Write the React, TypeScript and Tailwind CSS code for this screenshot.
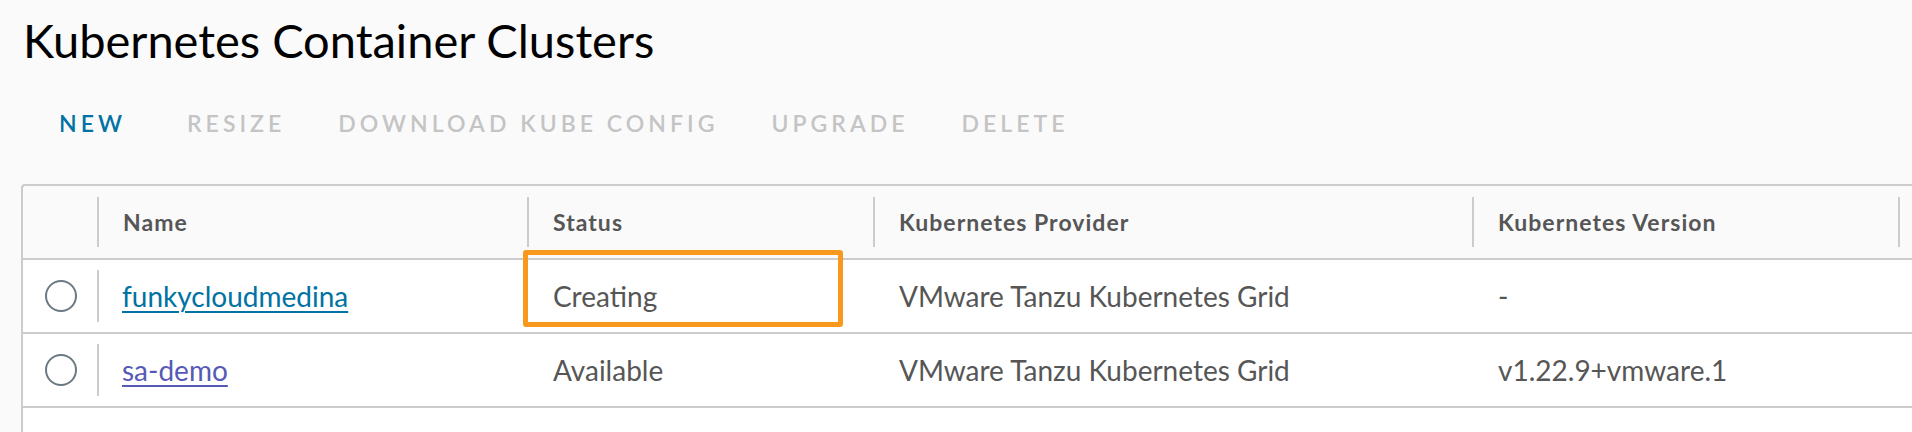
import React from 'react';

const actions = [
  { label: 'NEW', enabled: true },
  { label: 'RESIZE', enabled: false },
  { label: 'DOWNLOAD KUBE CONFIG', enabled: false },
  { label: 'UPGRADE', enabled: false },
  { label: 'DELETE', enabled: false },
];

const clusters = [
  {
    name: 'funkycloudmedina',
    visited: false,
    status: 'Creating',
    provider: 'VMware Tanzu Kubernetes Grid',
    version: '-',
  },
  {
    name: 'sa-demo',
    visited: true,
    status: 'Available',
    provider: 'VMware Tanzu Kubernetes Grid',
    version: 'v1.22.9+vmware.1',
  },
];

const cols = 'grid grid-cols-[74px_430px_346px_599px_426px_1fr]';

function HeaderCell({ label }: { label?: string }) {
  return (
    <div className="flex items-center">
      <div className="w-[2px] h-[50px] bg-[#cccccc]" />
      {label && (
        <span className="ml-[24px] text-[23px] font-bold tracking-[0.045em] text-[#565656]">
          {label}
        </span>
      )}
    </div>
  );
}

export default function App() {
  return (
    <div className="relative w-[1912px] h-[432px] overflow-hidden bg-[#fafafa] font-['Lato',sans-serif]">
      <h1 className="pl-[23px] pt-[15px] text-[47px] leading-[50px] font-normal text-black">
        Kubernetes Container Clusters
      </h1>

      <div className="flex items-center pl-[59px] mt-[47px] gap-[53px]">
        {actions.map((a) => (
          <button
            key={a.label}
            className={`text-[23px] leading-[23px] font-semibold tracking-[0.175em] ${
              a.enabled ? 'text-[#0072a3] mr-[8px]' : 'text-[#c4c4c4]'
            }`}
          >
            {a.label}
          </button>
        ))}
      </div>

      <div className="ml-[21px] mt-[49px] w-[1920px] h-[300px] bg-white border-l-2 border-t-2 border-[#cccccc] rounded-tl-[4px]">
        <div className={`${cols} h-[74px] bg-[#fafafa] border-b-2 border-[#cccccc] rounded-tl-[4px]`}>
          <div />
          <HeaderCell label="Name" />
          <HeaderCell label="Status" />
          <HeaderCell label="Kubernetes Provider" />
          <HeaderCell label="Kubernetes Version" />
          <HeaderCell />
        </div>

        {clusters.map((c) => (
          <div key={c.name} className={`${cols} h-[74px] border-b-2 border-[#cccccc] text-[28px] text-[#565656]`}>
            <div className="flex items-center justify-center pl-[2px]">
              <span className="w-[32px] h-[32px] rounded-full border-2 border-[#6b7a82]" />
            </div>
            <div className="flex items-center">
              <div className="w-[2px] h-[52px] bg-[#cccccc]" />
              <a
                href="#"
                className={`ml-[23px] underline underline-offset-[4px] decoration-[1.5px] ${
                  c.visited ? 'text-[#5659b6]' : 'text-[#0072a3]'
                }`}
              >
                {c.name}
              </a>
            </div>
            <div className="flex items-center pl-[26px]">{c.status}</div>
            <div className="flex items-center pl-[26px]">{c.provider}</div>
            <div className="flex items-center pl-[26px]">{c.version}</div>
            <div />
          </div>
        ))}
      </div>

      {/* highlight around the status being created */}
      <div className="absolute left-[523px] top-[250px] w-[320px] h-[77px] border-[5px] border-[#f8981d] rounded-[3px]" />
    </div>
  );
}
